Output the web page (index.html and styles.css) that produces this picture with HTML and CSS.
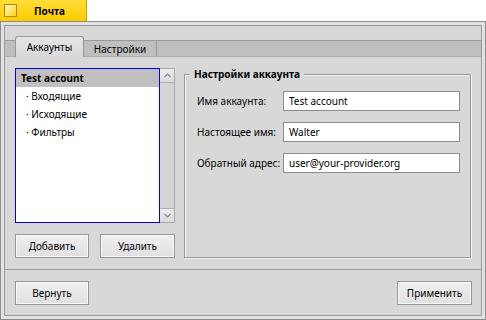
FILE: index.html
```html
<!DOCTYPE html>
<html lang="ru">
<head>
  <meta charset="UTF-8">
  <title>Почта</title>
<link rel="stylesheet" href="styles.css">
</head>
<body>
  <div class="title-tab">
    <span class="zoom-box"></span>
    <span class="title">Почта</span>
  </div>

  <div class="window">
    <div class="window-body">
      <div class="tabbar">
        <div class="tab active">Аккаунты</div>
        <div class="tab">Настройки</div>
      </div>

      <div class="tabpanel">
        <div class="accounts">
          <div class="list-wrap">
            <ul class="list">
              <li class="selected">Test account</li>
              <li class="sub">Входящие</li>
              <li class="sub">Исходящие</li>
              <li class="sub">Фильтры</li>
            </ul>
            <div class="scrollbar">
              <div class="arrow up"><svg width="7" height="5" viewBox="0 0 7 5"><path d="M0.5 4 L3.5 1 L6.5 4" fill="none" stroke="#8a8a8a" stroke-width="1.2"/></svg></div>
              <div class="track"></div>
              <div class="arrow down"><svg width="7" height="5" viewBox="0 0 7 5"><path d="M0.5 1 L3.5 4 L6.5 1" fill="none" stroke="#8a8a8a" stroke-width="1.2"/></svg></div>
            </div>
          </div>
          <div class="list-buttons">
            <button class="btn">Добавить</button>
            <button class="btn">Удалить</button>
          </div>
        </div>

        <fieldset class="box">
          <legend>Настройки аккаунта</legend>
          <div class="form">
            <label>Имя аккаунта:</label>
            <input type="text" value="Test account">
            <label>Настоящее имя:</label>
            <input type="text" value="Walter">
            <label>Обратный адрес:</label>
            <input type="text" value="user@your-provider.org">
          </div>
        </fieldset>
      </div>

      <div class="actions">
        <button class="btn">Вернуть</button>
        <button class="btn wide">Применить</button>
      </div>
    </div>
  </div>
</body>
</html>
```

FILE: styles.css
```css
* {
  box-sizing: border-box;
}

body {
  margin: 0;
  width: 486px;
  background-color: #fff;
  font-family: "Noto Sans", "DejaVu Sans", sans-serif;
  font-size: 10px;
  color: #000;
}

/* window tab */
.title-tab {
  width: 87px;
  height: 21px;
  display: flex;
  align-items: center;
  padding-left: 4px;
  background: linear-gradient(#ffdd3a, #ffcb00);
  border-right: 1px solid #c9a400;
}

.zoom-box {
  width: 13px;
  height: 13px;
  border: 1px solid #b08c00;
  background: linear-gradient(135deg, #fff8c8, #ffd21a);
}

.title {
  flex: 1;
  text-align: center;
  font-weight: bold;
  padding-right: 4px;
}

/* window frame */
.window {
  height: 299px;
  border: 1px solid #8c8c8c;
  padding: 3px;
  background-color: #e2e2e2;
}

.window-body {
  height: 100%;
  border: 1px solid #999;
  background-color: #d8d8d8;
  padding-top: 10px;
  display: flex;
  flex-direction: column;
}

/* tabs */
.tabbar {
  display: flex;
  height: 21px;
  padding-left: 10px;
  background: linear-gradient(transparent 4px, #9a9a9a 4px, #9a9a9a 5px, #bfbfbf 5px, #bfbfbf 20px, #acacac 20px);
}

.tab {
  display: flex;
  align-items: center;
  justify-content: center;
}

.tab.active {
  width: 69px;
  height: 21px;
  border: 1px solid #999;
  border-bottom: none;
  border-radius: 3px 3px 0 0;
  background: linear-gradient(#e6e6e6, #d8d8d8);
}

.tab:not(.active) {
  width: 73px;
  margin-top: 5px;
  height: 15px;
  border-right: 1px solid #999;
}

.tabpanel {
  flex: 1;
  display: flex;
  gap: 9px;
  padding: 11px 10px 11px 10px;
  border-bottom: 1px solid #999;
}

/* accounts list */
.accounts {
  width: 160px;
  display: flex;
  flex-direction: column;
}

.list-wrap {
  height: 155px;
  display: flex;
}

.list {
  flex: 1;
  margin: 0;
  padding: 0;
  list-style: none;
  border: 1px solid #0000e6;
  background-color: #fff;
}

.list li {
  height: 18px;
  line-height: 18px;
  padding-left: 5px;
}

.list li.selected {
  background-color: #c0c0c0;
  font-weight: bold;
}

.list li.sub {
  padding-left: 10px;
}

.list li.sub::before {
  content: "· ";
}

.scrollbar {
  width: 15px;
  display: flex;
  flex-direction: column;
  border: 1px solid #a8a8a8;
  border-left: none;
  background-color: #e0e0e0;
}

.scrollbar .arrow {
  height: 14px;
  display: flex;
  align-items: center;
  justify-content: center;
  background: linear-gradient(#ececec, #dcdcdc);
}

.scrollbar .up {
  border-bottom: 1px solid #b0b0b0;
}

.scrollbar .down {
  border-top: 1px solid #b0b0b0;
}

.scrollbar .track {
  flex: 1;
  background-color: #d4d4d4;
}

.list-buttons {
  margin-top: 11px;
  display: flex;
  justify-content: space-between;
}

/* buttons */
.btn {
  width: 74px;
  height: 24px;
  padding: 0;
  font-family: inherit;
  font-size: 10px;
  color: #000;
  border: 1px solid #979797;
  box-shadow: inset 0 0 0 1px #f8f8f8;
  background: linear-gradient(#f0f0f0, #e0e0e0);
}

.btn.wide,
.list-buttons .btn + .btn {
  width: 75px;
}

/* settings box */
.box {
  flex: 1;
  margin: -1px 0 0 0;
  padding: 0;
  min-width: 0;
  border: 1px solid #999;
  box-shadow: inset 1px 1px 0 #f4f4f4, 1px 1px 0 #f4f4f4;
}

.box legend {
  margin-left: 5px;
  padding: 0 4px;
  line-height: 15px;
  font-weight: bold;
  background-color: #d8d8d8;
}

.form {
  display: grid;
  grid-template-columns: 86px 177px;
  grid-auto-rows: 20px;
  row-gap: 11px;
  align-items: center;
  padding: 9px 10px 0 12px;
}

.form input {
  height: 20px;
  width: 100%;
  padding: 0 5px;
  font-family: inherit;
  font-size: 10px;
  color: #000;
  border: 1px solid #8c8c8c;
  background-color: #fff;
  outline: none;
}

/* bottom buttons */
.actions {
  display: flex;
  justify-content: space-between;
  padding: 11px 9px 10px 10px;
}
```
